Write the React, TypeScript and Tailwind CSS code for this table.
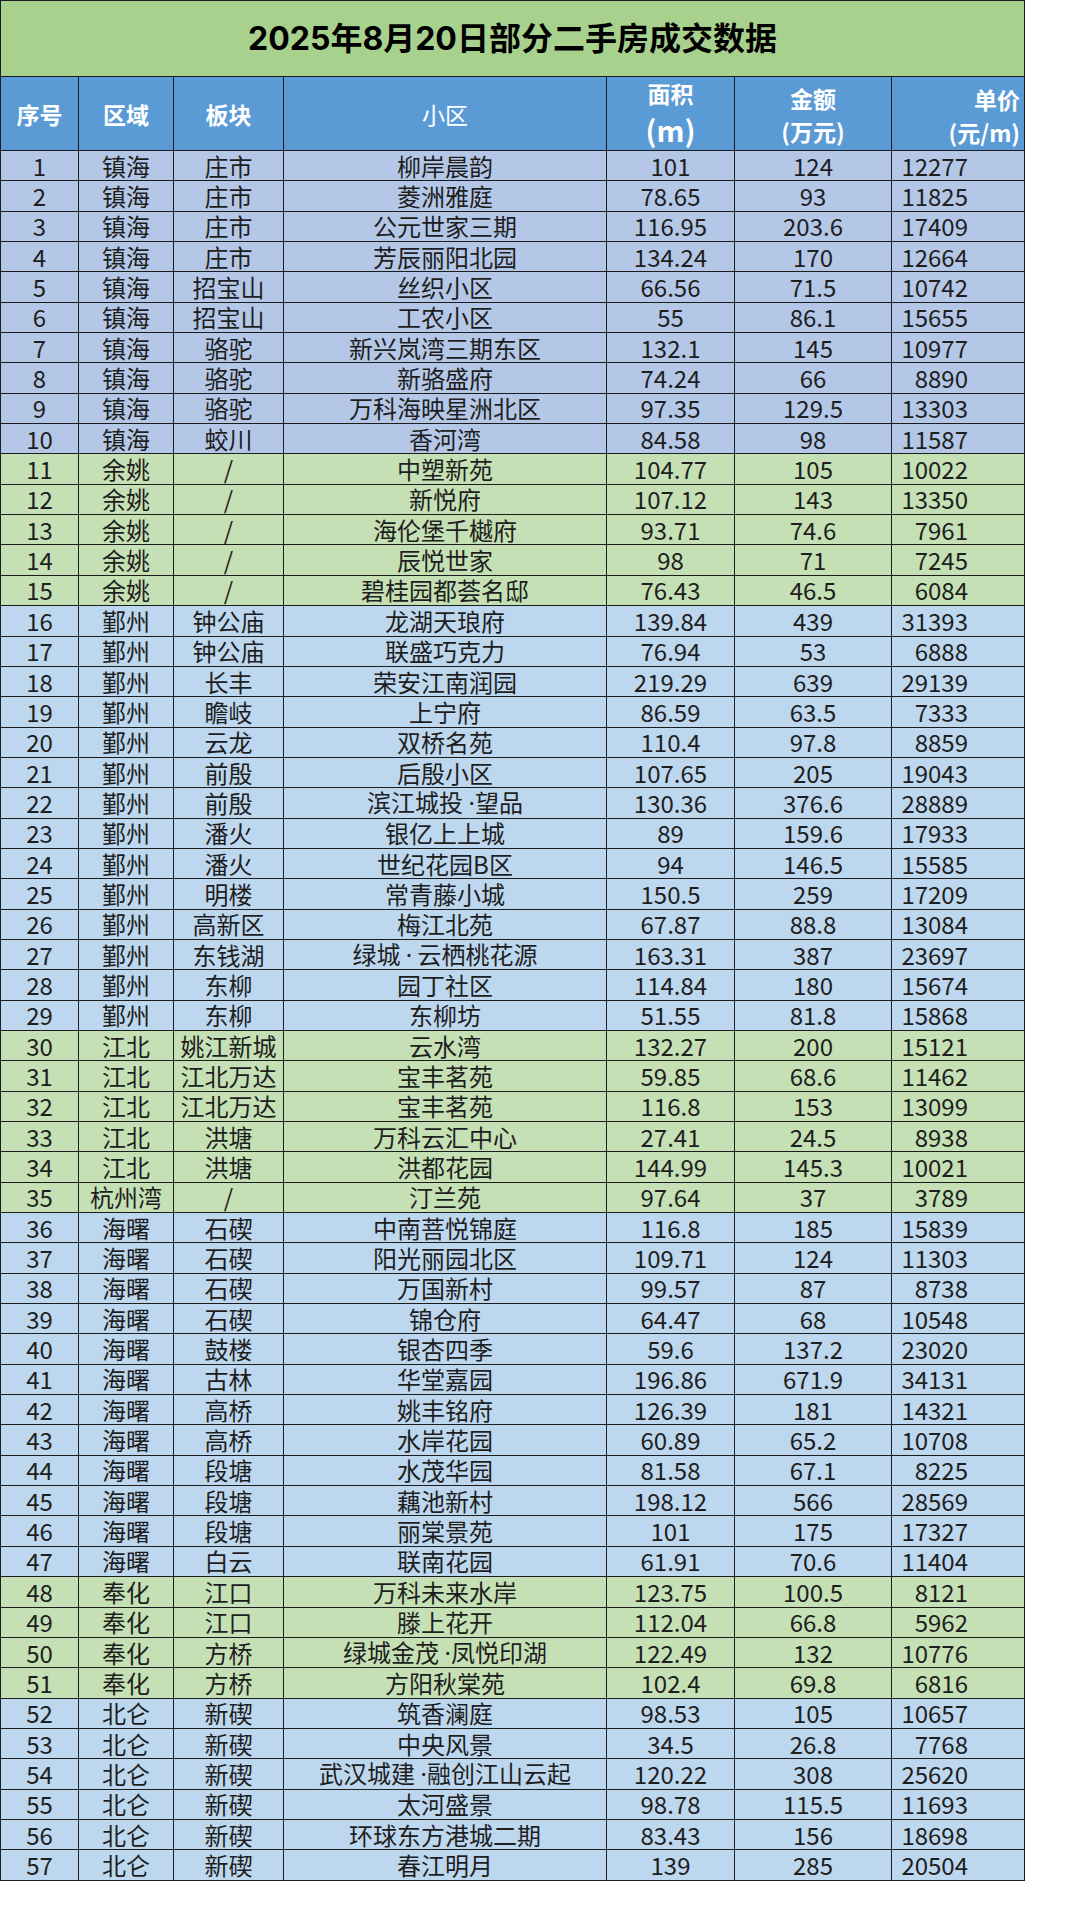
import React from "react";

type Row = [number, string, string, string, string, string, string];

const rows: Row[] = [
  [1, "镇海", "庄市", "柳岸晨韵", "101", "124", "12277"],
  [2, "镇海", "庄市", "菱洲雅庭", "78.65", "93", "11825"],
  [3, "镇海", "庄市", "公元世家三期", "116.95", "203.6", "17409"],
  [4, "镇海", "庄市", "芳辰丽阳北园", "134.24", "170", "12664"],
  [5, "镇海", "招宝山", "丝织小区", "66.56", "71.5", "10742"],
  [6, "镇海", "招宝山", "工农小区", "55", "86.1", "15655"],
  [7, "镇海", "骆驼", "新兴岚湾三期东区", "132.1", "145", "10977"],
  [8, "镇海", "骆驼", "新骆盛府", "74.24", "66", "8890"],
  [9, "镇海", "骆驼", "万科海映星洲北区", "97.35", "129.5", "13303"],
  [10, "镇海", "蛟川", "香河湾", "84.58", "98", "11587"],
  [11, "余姚", "/", "中塑新苑", "104.77", "105", "10022"],
  [12, "余姚", "/", "新悦府", "107.12", "143", "13350"],
  [13, "余姚", "/", "海伦堡千樾府", "93.71", "74.6", "7961"],
  [14, "余姚", "/", "辰悦世家", "98", "71", "7245"],
  [15, "余姚", "/", "碧桂园都荟名邸", "76.43", "46.5", "6084"],
  [16, "鄞州", "钟公庙", "龙湖天琅府", "139.84", "439", "31393"],
  [17, "鄞州", "钟公庙", "联盛巧克力", "76.94", "53", "6888"],
  [18, "鄞州", "长丰", "荣安江南润园", "219.29", "639", "29139"],
  [19, "鄞州", "瞻岐", "上宁府", "86.59", "63.5", "7333"],
  [20, "鄞州", "云龙", "双桥名苑", "110.4", "97.8", "8859"],
  [21, "鄞州", "前殷", "后殷小区", "107.65", "205", "19043"],
  [22, "鄞州", "前殷", "滨江城投 ·望品", "130.36", "376.6", "28889"],
  [23, "鄞州", "潘火", "银亿上上城", "89", "159.6", "17933"],
  [24, "鄞州", "潘火", "世纪花园B区", "94", "146.5", "15585"],
  [25, "鄞州", "明楼", "常青藤小城", "150.5", "259", "17209"],
  [26, "鄞州", "高新区", "梅江北苑", "67.87", "88.8", "13084"],
  [27, "鄞州", "东钱湖", "绿城 · 云栖桃花源", "163.31", "387", "23697"],
  [28, "鄞州", "东柳", "园丁社区", "114.84", "180", "15674"],
  [29, "鄞州", "东柳", "东柳坊", "51.55", "81.8", "15868"],
  [30, "江北", "姚江新城", "云水湾", "132.27", "200", "15121"],
  [31, "江北", "江北万达", "宝丰茗苑", "59.85", "68.6", "11462"],
  [32, "江北", "江北万达", "宝丰茗苑", "116.8", "153", "13099"],
  [33, "江北", "洪塘", "万科云汇中心", "27.41", "24.5", "8938"],
  [34, "江北", "洪塘", "洪都花园", "144.99", "145.3", "10021"],
  [35, "杭州湾", "/", "汀兰苑", "97.64", "37", "3789"],
  [36, "海曙", "石碶", "中南菩悦锦庭", "116.8", "185", "15839"],
  [37, "海曙", "石碶", "阳光丽园北区", "109.71", "124", "11303"],
  [38, "海曙", "石碶", "万国新村", "99.57", "87", "8738"],
  [39, "海曙", "石碶", "锦仓府", "64.47", "68", "10548"],
  [40, "海曙", "鼓楼", "银杏四季", "59.6", "137.2", "23020"],
  [41, "海曙", "古林", "华堂嘉园", "196.86", "671.9", "34131"],
  [42, "海曙", "高桥", "姚丰铭府", "126.39", "181", "14321"],
  [43, "海曙", "高桥", "水岸花园", "60.89", "65.2", "10708"],
  [44, "海曙", "段塘", "水茂华园", "81.58", "67.1", "8225"],
  [45, "海曙", "段塘", "藕池新村", "198.12", "566", "28569"],
  [46, "海曙", "段塘", "丽棠景苑", "101", "175", "17327"],
  [47, "海曙", "白云", "联南花园", "61.91", "70.6", "11404"],
  [48, "奉化", "江口", "万科未来水岸", "123.75", "100.5", "8121"],
  [49, "奉化", "江口", "滕上花开", "112.04", "66.8", "5962"],
  [50, "奉化", "方桥", "绿城金茂 ·凤悦印湖", "122.49", "132", "10776"],
  [51, "奉化", "方桥", "方阳秋棠苑", "102.4", "69.8", "6816"],
  [52, "北仑", "新碶", "筑香澜庭", "98.53", "105", "10657"],
  [53, "北仑", "新碶", "中央风景", "34.5", "26.8", "7768"],
  [54, "北仑", "新碶", "武汉城建 ·融创江山云起", "120.22", "308", "25620"],
  [55, "北仑", "新碶", "太河盛景", "98.78", "115.5", "11693"],
  [56, "北仑", "新碶", "环球东方港城二期", "83.43", "156", "18698"],
  [57, "北仑", "新碶", "春江明月", "139", "285", "20504"],
];

function rowBg(n: number): string {
  if (n <= 10) return "bg-[#b4c7e7]";
  if (n <= 15) return "bg-[#c5e0b4]";
  if (n <= 29) return "bg-[#bdd7ee]";
  if (n <= 35) return "bg-[#c5e0b4]";
  if (n <= 47) return "bg-[#bdd7ee]";
  if (n <= 51) return "bg-[#c5e0b4]";
  return "bg-[#bdd7ee]";
}

function Name({ text }: { text: string }) {
  const i = text.indexOf("·");
  if (i < 0) return <>{text}</>;
  return (
    <>
      {text.slice(0, i)}
      <span style={{ fontFamily: '"Noto Sans", sans-serif' }}>·</span>
      {text.slice(i + 1)}
    </>
  );
}

const cell = "border border-[#1c1c1c] p-0 text-center align-middle whitespace-nowrap";
const hcell = "border border-[#1c1c1c] p-0 text-white whitespace-nowrap";

export default function App() {
  return (
    <div
      className="w-[1080px] h-[1926px] bg-white overflow-hidden"
      style={{ fontFamily: '"Noto Sans CJK SC", "Noto Sans", sans-serif' }}
    >
      <table className="w-[1024px] table-fixed border-collapse">
        <colgroup>
          <col className="w-[78px]" />
          <col className="w-[95px]" />
          <col className="w-[110px]" />
          <col className="w-[323px]" />
          <col className="w-[128px]" />
          <col className="w-[157px]" />
          <col className="w-[133px]" />
        </colgroup>
        <thead>
          <tr className="h-[76px]">
            <th
              colSpan={7}
              className="border border-[#1c1c1c] bg-[#a9d18e] p-0 text-center align-middle text-[32px] font-bold text-black leading-[40px]"
              style={{ fontFamily: '"Inter", "Noto Sans CJK SC", sans-serif' }}
            >
              2025年8月20日部分二手房成交数据
            </th>
          </tr>
          <tr className="h-[74px] bg-[#5b9bd5]">
            <th className={`${hcell} text-center align-middle text-[23px] font-bold leading-[30px]`}>序号</th>
            <th className={`${hcell} text-center align-middle text-[23px] font-bold leading-[30px]`}>区域</th>
            <th className={`${hcell} text-center align-middle text-[23px] font-bold leading-[30px]`}>板块</th>
            <th className={`${hcell} text-center align-middle text-[23px] font-normal leading-[30px]`}>小区</th>
            <th className={`${hcell} text-center align-top pt-[4px]`}>
              <div className="h-[24px] text-[23px] font-bold leading-[24px]">面积</div>
              <div className="mt-[8px] h-[32px] text-[29px] font-bold leading-[32px]">(m)</div>
            </th>
            <th className={`${hcell} text-center align-top pt-[9px]`}>
              <div className="h-[24px] text-[23px] font-bold leading-[24px]">金额</div>
              <div className="mt-[9px] h-[24px] text-[23px] font-bold leading-[24px]">(万元)</div>
            </th>
            <th className={`${hcell} text-right align-top pt-[10px] pr-[4px]`}>
              <div className="h-[24px] text-[23px] font-bold leading-[24px]">单价</div>
              <div className="mt-[9px] h-[24px] text-[23px] font-bold leading-[24px]">(元/m)</div>
            </th>
          </tr>
        </thead>
        <tbody className="text-[24px] leading-[28px] text-[#1e1e1e]">
          {rows.map((r) => (
            <tr key={r[0]} className={`h-[30.35px] ${rowBg(r[0])}`}>
              <td className={cell}>{r[0]}</td>
              <td className={cell}>{r[1]}</td>
              <td className={cell}>{r[2]}</td>
              <td className={cell}>
                <Name text={r[3]} />
              </td>
              <td className={cell}>{r[4]}</td>
              <td className={cell}>{r[5]}</td>
              <td className="border border-[#1c1c1c] p-0 pr-[56px] text-right align-middle whitespace-nowrap">{r[6]}</td>
            </tr>
          ))}
        </tbody>
      </table>
    </div>
  );
}
